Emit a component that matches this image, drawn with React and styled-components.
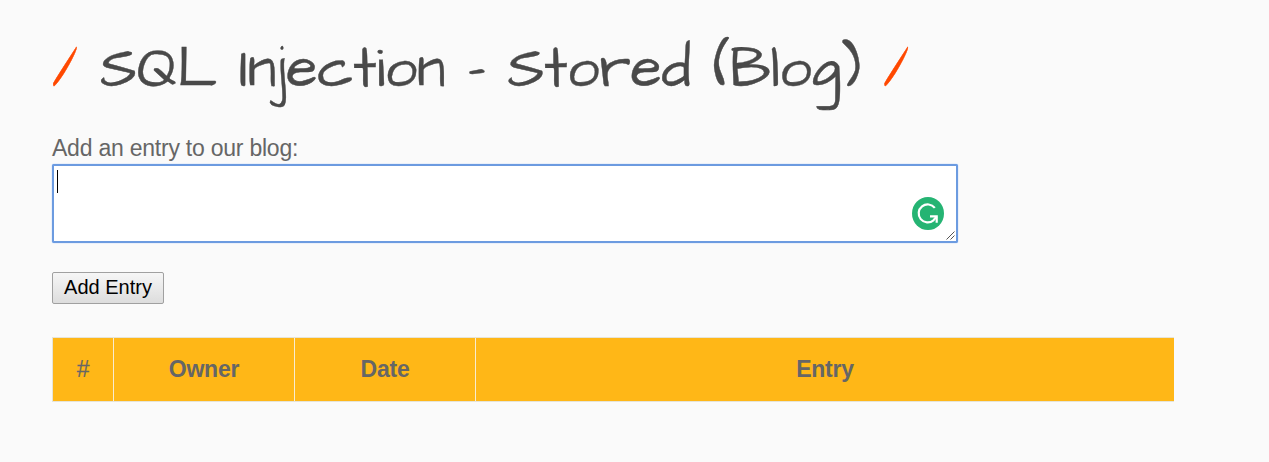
import React from "react";
import styled, { createGlobalStyle } from "styled-components";

const GlobalStyle = createGlobalStyle`
  body {
    margin: 0;
    background: #fafafa;
    color: #666;
    font-family: Arial, "Liberation Sans", sans-serif;
    font-size: 23px;
  }
`;

const Page = styled.main`
  box-sizing: border-box;
  height: 462px;
  padding: 37px 95px 0 52px;
  overflow: hidden;
`;

const Title = styled.h1`
  height: 97px;
  margin: 0;
  color: #494949;
  font: 400 57px/66px "Architects Daughter", cursive;
  word-spacing: -0.6px;
  white-space: nowrap;
  -webkit-text-stroke: 0.4px currentColor;
`;

const Slash = styled.span`
  color: #ff4800;
`;

const Label = styled.label`
  display: block;
  height: 30px;
  line-height: 28px;
  letter-spacing: -0.23px;
`;

const Field = styled.div`
  position: relative;
  width: 906px;
  height: 79px;
`;

const TextArea = styled.textarea`
  display: block;
  box-sizing: border-box;
  width: 100%;
  height: 100%;
  margin: 0;
  padding: 3px;
  border: 2px solid #6c9be0;
  border-radius: 2px;
  outline: 0;
  background: #fff;
  box-shadow: 0 0 1px #5b9bff;
  font: inherit;
  resize: none;
`;

const Grip = styled.svg`
  position: absolute;
  right: 3px;
  bottom: 3px;
  width: 9px;
  height: 9px;
`;

const Caret = styled.span`
  position: absolute;
  left: 5px;
  top: 6px;
  width: 1px;
  height: 23px;
  background: #000;
`;

const Badge = styled.svg`
  position: absolute;
  left: 860px;
  top: 33px;
  width: 32px;
  height: 33px;
`;

const Button = styled.button`
  display: block;
  box-sizing: border-box;
  width: 112px;
  height: 32px;
  margin: 29px 0 33px;
  padding: 0 0 2px;
  border: 1px solid #a0a0a0;
  border-radius: 2px;
  background: linear-gradient(#f6f6f6, #dddddd);
  color: #000;
  font: 20px/27px Arial, "Liberation Sans", sans-serif;
`;

const Table = styled.div`
  display: grid;
  grid-template-columns: 60px 180px 180px 698px;
  gap: 1px;
  width: 1121px;
  height: 63px;
  border: 1px solid #e6e4d8;
  border-width: 1px 0 1px 1px;
  background: #f8ecd0;
`;

const HeadCell = styled.div`
  display: flex;
  align-items: center;
  justify-content: center;
  background: #ffb717;
  letter-spacing: -0.23px;
  font-weight: 700;
`;

const Mark = styled.span`
  font-weight: 400;
  -webkit-text-stroke: 0.2px currentColor;
`;

export default function App() {
  return (
    <>
      <GlobalStyle />
      <Page>
        <Title>
          <Slash>/</Slash> SQL Injection - Stored (Blog) <Slash>/</Slash>
        </Title>
        <Label htmlFor="entry">Add an entry to our blog:</Label>
        <Field>
          <TextArea id="entry" />
          <Caret />
          <Badge viewBox="0 0 32 33" aria-hidden="true">
            <ellipse cx="16" cy="16.5" rx="16" ry="16.5" fill="#25b473" />
            <path d="M22.8 10.9A9 9 0 1 0 21.5 23.3L24.6 19.6" fill="none" stroke="#fff" strokeWidth="2.2" />
            <path d="M18 19.3h6.7v6.4" fill="none" stroke="#fff" strokeWidth="2.2" />
          </Badge>
          <Grip viewBox="0 0 9 9" aria-hidden="true">
            <path d="M0.5 8.5L8.5 0.5M4.5 8.5L8.5 4.5" fill="none" stroke="#555" />
          </Grip>
        </Field>
        <Button type="button">Add Entry</Button>
        <Table>
          <HeadCell><Mark>#</Mark></HeadCell>
          <HeadCell>Owner</HeadCell>
          <HeadCell>Date</HeadCell>
          <HeadCell>Entry</HeadCell>
        </Table>
      </Page>
    </>
  );
}
